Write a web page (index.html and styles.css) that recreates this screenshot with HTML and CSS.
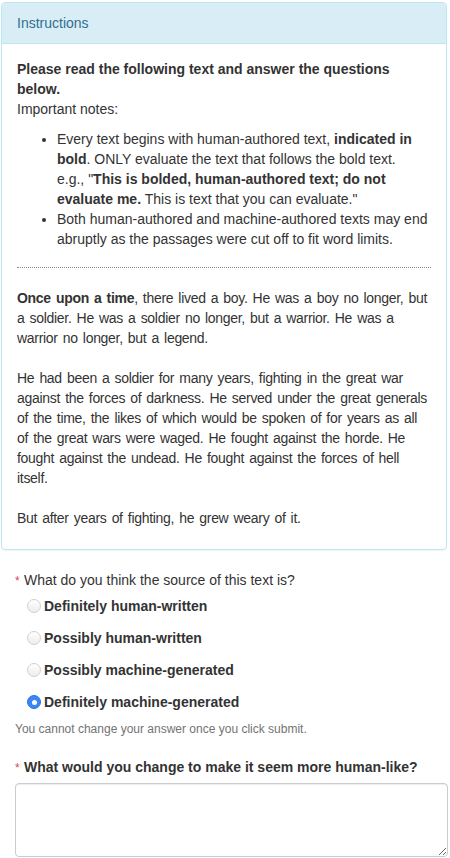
FILE: index.html
```html
<!DOCTYPE html>
<html>
<head>
<meta charset="utf-8">
<link rel="stylesheet" href="styles.css">
</head>
<body>
<div class="page">
  <div class="panel">
    <div class="panel-heading">Instructions</div>
    <div class="panel-body">
      <p class="intro"><b>Please read the following text and answer the questions below.</b><br>Important notes:</p>
      <ul class="notes">
        <li>Every text begins with human-authored text, <b>indicated in bold</b>. ONLY evaluate the text that follows the bold text.<br>e.g., "<b>This is bolded, human-authored text; do not evaluate me.</b> This is text that you can evaluate."</li>
        <li>Both human-authored and machine-authored texts may end abruptly as the passages were cut off to fit word limits.</li>
      </ul>
      <hr class="divider">
      <p class="passage"><b>Once upon a time</b>, there lived a boy. He was a boy no longer, but a soldier. He was a soldier no longer, but a warrior. He was a warrior no longer, but a legend.</p>
      <p class="passage">He had been a soldier for many years, fighting in the great war against the forces of darkness. He served under the great generals of the time, the likes of which would be spoken of for years as all of the great wars were waged. He fought against the horde. He fought against the undead. He fought against the forces of hell itself.</p>
      <p class="passage last">But after years of fighting, he grew weary of it.</p>
    </div>
  </div>

  <div class="form">
    <div class="question"><span class="req">*</span><span>What do you think the source of this text is?</span></div>
    <div class="options">
      <label class="option"><span class="radio"></span><span>Definitely human-written</span></label>
      <label class="option"><span class="radio"></span><span>Possibly human-written</span></label>
      <label class="option"><span class="radio"></span><span>Possibly machine-generated</span></label>
      <label class="option"><span class="radio checked"></span><span>Definitely machine-generated</span></label>
    </div>
    <p class="help">You cannot change your answer once you click submit.</p>
    <div class="question bold"><span class="req">*</span><span>What would you change to make it seem more human-like?</span></div>
    <textarea class="answer"></textarea>
  </div>
</div>
</body>
</html>
```
FILE: styles.css
```css
html, body {
  margin: 0;
  padding: 0;
  background: #fff;
}
body {
  font-family: "Liberation Sans", Arial, Helvetica, sans-serif;
  font-size: 14px;
  line-height: 20px;
  color: #333;
  overflow: hidden;
}
.page {
  padding: 2px 3px 0 1px;
}
.panel {
  border: 1px solid #bce8f1;
  border-radius: 4px;
  margin-bottom: 20px;
  box-shadow: 0 1px 1px rgba(0,0,0,0.05);
}
.panel-heading {
  background: #d9edf7;
  color: #31708f;
  border-bottom: 1px solid #bce8f1;
  border-radius: 3px 3px 0 0;
  padding: 10px 15px;
}
.panel-body {
  padding: 15px 15px 21px 15px;
}
.intro {
  margin: 0 0 10px;
}
.notes {
  margin: 0 0 10px;
  padding-left: 40px;
}
.divider {
  border: 0;
  border-top: 1px dotted #8a8a8a;
  margin: 18px 0 20px;
  height: 0;
}
.passage {
  margin: 0 0 20px;
  letter-spacing: -0.3px;
  word-spacing: 1.5px;
}
.passage.last {
  margin-bottom: 0;
}
.form {
  padding: 0 0 0 14px;
}
.question {
  display: flex;
  align-items: baseline;
}
.question.bold {
  font-weight: bold;
  margin-top: 19px;
  margin-bottom: 5px;
}
.req {
  color: #e0494a;
  font-size: 12px;
  font-weight: normal;
  width: 9px;
  flex: none;
}
.options {
  padding-left: 12px;
  margin-top: 5px;
  display: flex;
  flex-direction: column;
  gap: 12px;
}
.option {
  display: flex;
  align-items: center;
  font-weight: bold;
  gap: 3px;
}
.radio {
  width: 12px;
  height: 12px;
  border-radius: 50%;
  border: 1px solid #d2d2d2;
  background: linear-gradient(#ffffff, #ececec);
  flex: none;
  position: relative;
}
.radio.checked {
  background: #3b86f7;
  border-color: #2f74e0;
}
.radio.checked::after {
  content: "";
  position: absolute;
  left: 3.5px;
  top: 3.5px;
  width: 5px;
  height: 5px;
  border-radius: 50%;
  background: #fff;
}
.help {
  margin: 9px 0 0;
  font-size: 12px;
  line-height: 17px;
  color: #737373;
}
.answer {
  display: block;
  box-sizing: border-box;
  width: 433px;
  height: 74px;
  border: 1px solid #ccc;
  border-radius: 4px;
  margin: 0;
  padding: 6px 12px;
  font-family: "Liberation Sans", Arial, sans-serif;
  box-shadow: inset 0 1px 1px rgba(0,0,0,0.075);
}
```
